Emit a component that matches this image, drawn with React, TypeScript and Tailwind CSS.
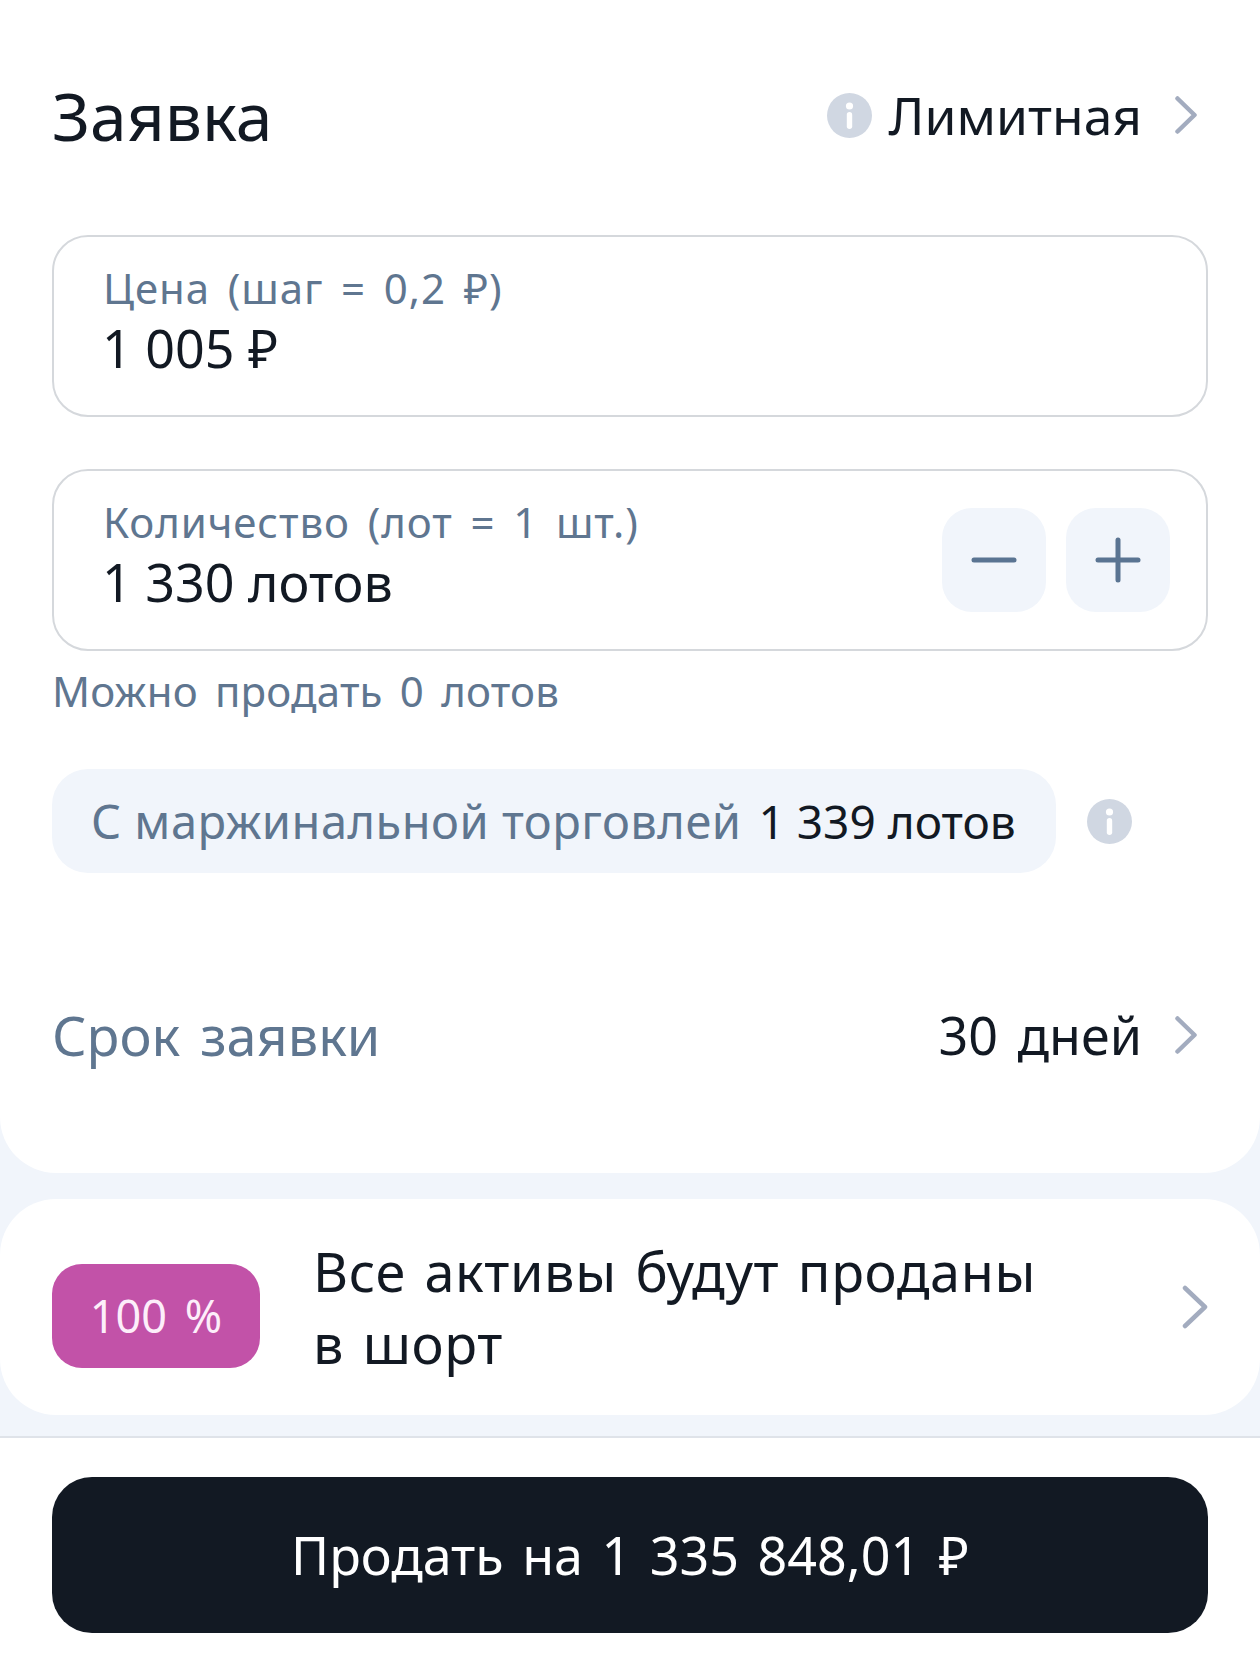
const font = "[font-family:'Noto_Sans','Liberation_Sans',sans-serif]";

function InfoIcon() {
  return (
    <svg width="45" height="45" viewBox="0 0 45 45" className="shrink-0">
      <circle cx="22.5" cy="22.5" r="22.5" fill="#d0d7e2" />
      <circle cx="22.5" cy="13" r="3.6" fill="#fff" />
      <rect x="19.8" y="19" width="5.4" height="17" rx="2.7" fill="#fff" />
    </svg>
  );
}

function Chevron({ large }: { large?: boolean }) {
  if (large) {
    return (
      <svg width="26" height="44" viewBox="0 0 26 44" fill="none" className="shrink-0">
        <path d="M3 3l20 19L3 41" stroke="#a3acbf" strokeWidth="4.5" strokeLinecap="round" strokeLinejoin="round" />
      </svg>
    );
  }
  return (
    <svg width="22" height="38" viewBox="0 0 22 38" fill="none" className="shrink-0">
      <path d="M2.5 2.5L19.5 19L2.5 35.5" stroke="#a3acbf" strokeWidth="4.5" strokeLinecap="round" strokeLinejoin="round" />
    </svg>
  );
}

function Field({ label, value, children }: { label: string; value: string; children?: React.ReactNode }) {
  return (
    <div className="flex h-[182px] items-center justify-between rounded-[36px] border-2 border-[#d5d8dc] pl-[49px] pr-[36px]">
      <div className="flex flex-col pb-[12px]">
        <span className="text-[42px] leading-[52px] tracking-[0.9px] text-[#5f7690] [word-spacing:6px]">{label}</span>
        <span className="-ml-[1px] mt-[4px] text-[52px] leading-[60px] text-[#121923]">{value}</span>
      </div>
      {children}
    </div>
  );
}

function StepButton({ plus }: { plus?: boolean }) {
  return (
    <button type="button" className="flex h-[104px] w-[104px] items-center justify-center rounded-[30px] bg-[#f1f5fb]">
      <svg width="46" height="46" viewBox="0 0 46 46" fill="none">
        <path d="M3 23h40" stroke="#5a7492" strokeWidth="5" strokeLinecap="round" />
        {plus && <path d="M23 3v40" stroke="#5a7492" strokeWidth="5" strokeLinecap="round" />}
      </svg>
    </button>
  );
}

export default function App() {
  return (
    <div className={`flex h-[1678px] w-[1260px] flex-col overflow-hidden bg-[#f1f5fb] ${font}`}>
      <section className="h-[1173px] rounded-b-[56px] bg-white px-[52px] pt-[75px]">
        <div className="flex h-[80px] items-center justify-between pr-[11px]">
          <h1 className="text-[66px] font-normal leading-[80px] text-[#121923]">Заявка</h1>
          <div className="flex items-center">
            <InfoIcon />
            <span className="ml-[17px] text-[51.5px] leading-[60px] text-[#121923]">Лимитная</span>
            <span className="ml-[33px]"><Chevron /></span>
          </div>
        </div>

        <div className="mt-[80px]">
          <Field label="Цена (шаг = 0,2 ₽)" value="1 005 ₽" />
        </div>
        <div className="mt-[52px]">
          <Field label="Количество (лот = 1 шт.)" value="1 330 лотов">
            <div className="flex gap-[20px]">
              <StepButton />
              <StepButton plus />
            </div>
          </Field>
        </div>
        <p className="mt-[14px] text-[42px] leading-[52px] tracking-[0.2px] text-[#5f7690] [word-spacing:6px]">Можно продать 0 лотов</p>

        <div className="mt-[52px] flex items-center">
          <div className="flex h-[104px] w-[1004px] items-center rounded-[36px] bg-[#f1f5fb] pl-[39px] text-[47px]">
            <span className="tracking-[0.5px] text-[#5f7690]">С маржинальной торговлей</span>
            <span className="ml-[17px] text-[46px] text-[#121923]">1 339 лотов</span>
          </div>
          <span className="ml-[31px]"><InfoIcon /></span>
        </div>

        <div className="mt-[127px] flex h-[70px] items-center justify-between pr-[11px]">
          <span className="text-[54px] text-[#5f7690] [word-spacing:6px]">Срок заявки</span>
          <div className="flex items-center">
            <span className="text-[52px] text-[#121923] [word-spacing:6px]">30 дней</span>
            <span className="ml-[33px]"><Chevron /></span>
          </div>
        </div>
      </section>

      <section className="mt-[26px] flex h-[216px] items-center rounded-[56px] bg-white pl-[52px] pr-[52px]">
        <div className="mt-[18px] flex h-[104px] w-[208px] shrink-0 items-center justify-center rounded-[30px] bg-[#c252a8] text-[45px] text-[#fdeefa] [word-spacing:6px]">
          100 %
        </div>
        <p className="ml-[53px] flex-1 text-[54px] leading-[72px] tracking-[0.6px] text-[#121923] [word-spacing:4px]">
          Все активы будут проданы
          <br />
          в шорт
        </p>
        <Chevron large />
      </section>

      <footer className="mt-[21px] flex-1 border-t-2 border-[#dfe3e9] bg-white px-[52px] pt-[39px]">
        <button type="button" className="flex h-[156px] w-full items-center justify-center rounded-[40px] bg-[#121923] text-[52px] text-white [word-spacing:5px]">
          Продать на 1 335 848,01 ₽
        </button>
      </footer>
    </div>
  );
}
